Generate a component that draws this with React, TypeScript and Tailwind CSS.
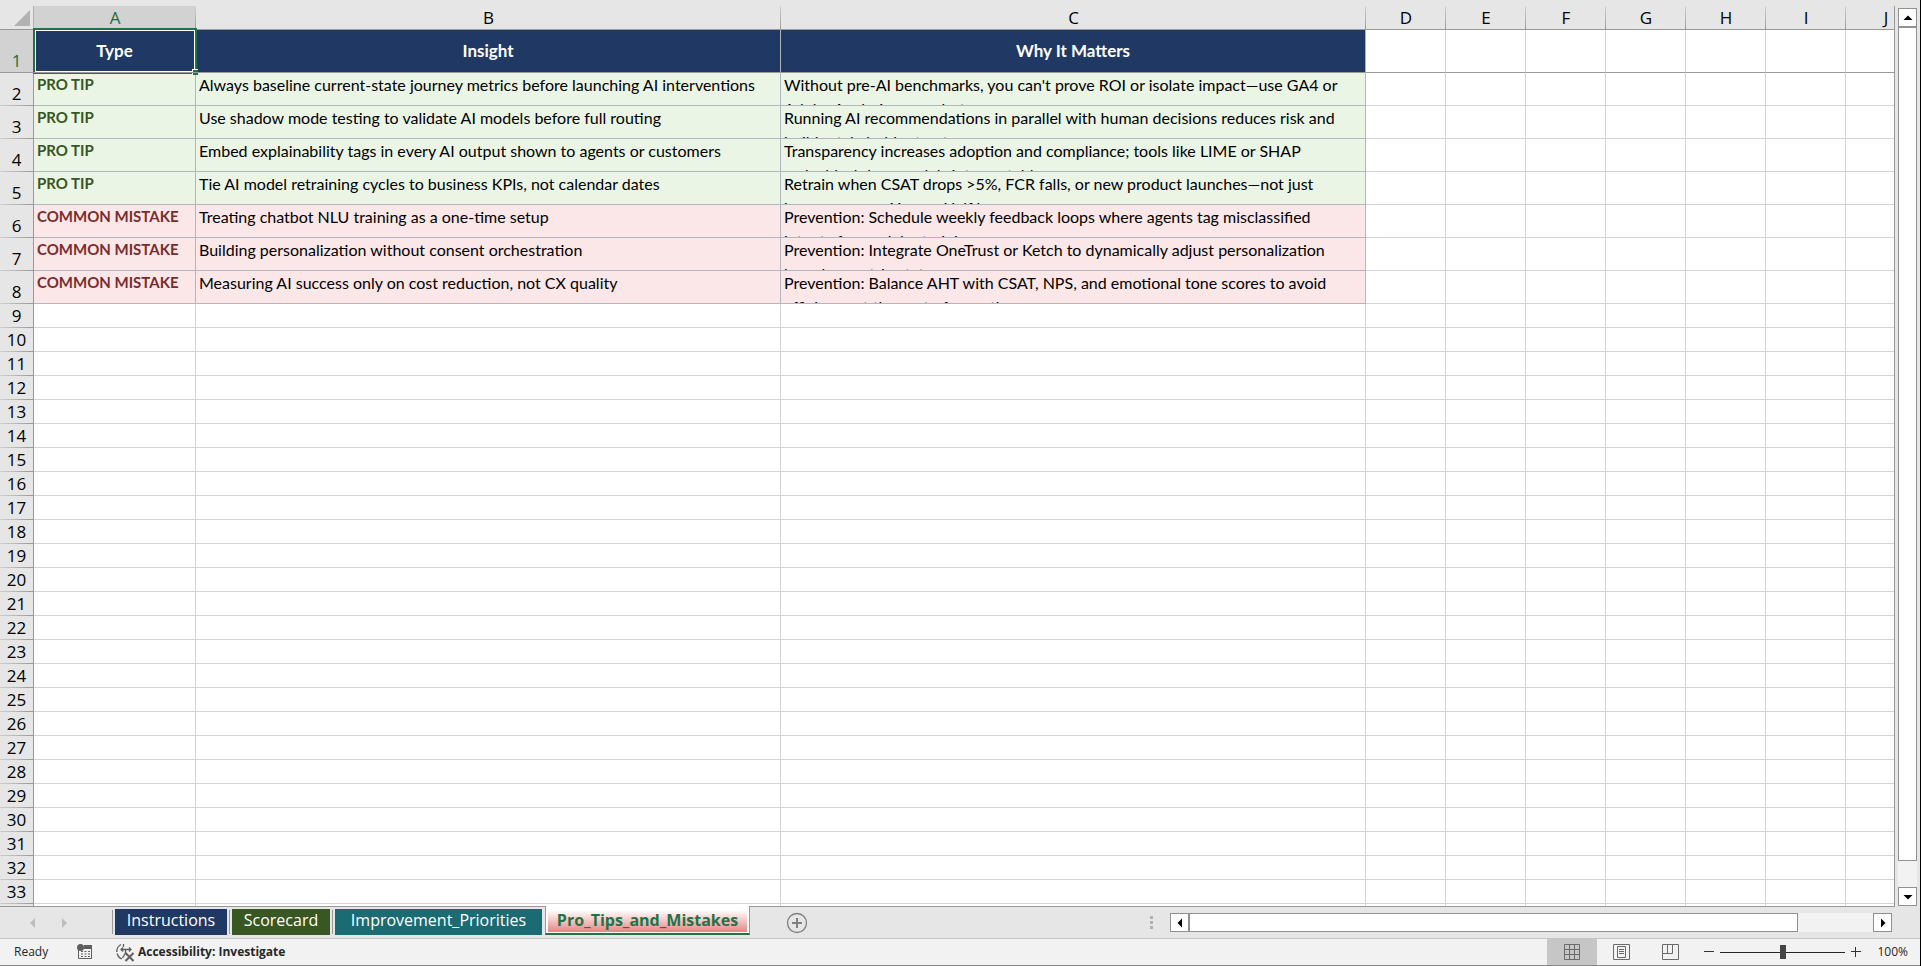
import { useState } from 'react';
import { clsx } from 'clsx';

const columns = ['A', 'B', 'C', 'D', 'E', 'F', 'G', 'H', 'I', 'J'];
const widths = ['w-[162px]', 'w-[585px]', 'w-[585px]', 'w-20', 'w-20', 'w-20', 'w-20', 'w-20', 'w-20', 'w-20'];
const blankColumns = columns.slice(3);
const blankRows = Array.from({ length: 26 }, (_, i) => i + 9);

const insights = [
  {
    type: 'PRO TIP',
    insight: 'Always baseline current-state journey metrics before launching AI interventions',
    why: ["Without pre-AI benchmarks, you can't prove ROI or isolate impact—use GA4 or", 'Adobe Analytics snapshots.'],
  },
  {
    type: 'PRO TIP',
    insight: 'Use shadow mode testing to validate AI models before full routing',
    why: ['Running AI recommendations in parallel with human decisions reduces risk and', 'builds stakeholder trust.'],
  },
  {
    type: 'PRO TIP',
    insight: 'Embed explainability tags in every AI output shown to agents or customers',
    why: ['Transparency increases adoption and compliance; tools like LIME or SHAP', 'make black-box models interpretable.'],
  },
  {
    type: 'PRO TIP',
    insight: 'Tie AI model retraining cycles to business KPIs, not calendar dates',
    why: ['Retrain when CSAT drops >5%, FCR falls, or new product launches—not just', 'because a new Year or Half began.'],
  },
  {
    type: 'COMMON MISTAKE',
    insight: 'Treating chatbot NLU training as a one-time setup',
    why: ['Prevention: Schedule weekly feedback loops where agents tag misclassified', 'intents for model retraining.'],
  },
  {
    type: 'COMMON MISTAKE',
    insight: 'Building personalization without consent orchestration',
    why: ['Prevention: Integrate OneTrust or Ketch to dynamically adjust personalization', 'based on opt-in status.'],
  },
  {
    type: 'COMMON MISTAKE',
    insight: 'Measuring AI success only on cost reduction, not CX quality',
    why: ['Prevention: Balance AHT with CSAT, NPS, and emotional tone scores to avoid', 'efficiency at the cost of empathy.'],
  },
];

const tabs = [
  { name: 'Instructions', style: 'w-28 bg-[#203864]' },
  { name: 'Scorecard', style: 'w-[98px] bg-[#385723]' },
  { name: 'Improvement_Priorities', style: 'w-[207px] bg-[#1b6b72]' },
];

const ui = "font-['Open_Sans','Noto_Sans',sans-serif]";
const rowHead =
  'p-0 text-center align-bottom font-normal text-[17px] leading-6 border-r border-[#999] bg-no-repeat bg-bottom bg-[length:100%_1px] bg-[linear-gradient(to_right,#d0d0d0,#999)]';
const scrollButton = 'flex size-[19px] shrink-0 items-center justify-center border border-[#919191] bg-white';

function Arrow({ d, className }: { d: string; className?: string }) {
  return (
    <svg viewBox="0 0 10 10" className={clsx('size-[10px]', className)} fill="currentColor">
      <path d={d} />
    </svg>
  );
}

function Sheet() {
  return (
    <div className="min-w-0 flex-1 overflow-hidden border-r border-b border-[#999] bg-white">
      <table className={clsx('w-max table-fixed border-separate border-spacing-0 text-black', ui)}>
        <colgroup>
          <col className="w-[34px]" />
          {columns.map((c, i) => (
            <col key={c} className={widths[i]} />
          ))}
        </colgroup>
        <thead>
          <tr className="h-6 bg-[#e6e6e6]">
            <td className="border-b border-[#999] p-0">
              <svg viewBox="0 0 34 23" className="block h-[23px] w-[34px]">
                <path d="M30 4v16H14z" fill="#b2b2b2" />
                <path d="M33.500 0v23" stroke="#b2b2b2" />
              </svg>
            </td>
            {columns.map((c) => (
              <th
                key={c}
                scope="col"
                className={clsx(
                  'border-b border-[#999] bg-[linear-gradient(to_bottom,#d0d0d0,#999)] bg-[length:1px_100%] bg-right bg-no-repeat p-0 text-[17px] leading-[23px] font-normal',
                  c === 'A' && 'bg-[#d2d2d2] text-[#1e6b41]',
                )}
              >
                {c}
              </th>
            ))}
          </tr>
        </thead>
        <tbody>
          <tr className="h-[43px]">
            <th scope="row" className="border-r border-b border-[#999] bg-[#d2d2d2] p-0 align-bottom text-[17px] leading-[22px] font-normal text-[#1e6b41]">
              1
            </th>
            {['Type', 'Insight', 'Why It Matters'].map((title, i) => (
              <td
                key={title}
                className="relative border-r border-b border-r-[#adb5c4] border-b-[#999] bg-[#203864] p-0 text-center font-[Lato,sans-serif] text-[17px] leading-6 font-bold text-white"
              >
                {title}
                {i === 0 && (
                  <>
                    <span className="absolute -top-0.5 -right-0.5 -bottom-0.5 -left-px z-10 border-2 border-[#217346]">
                      <span className="absolute inset-0 border border-white" />
                    </span>
                    <span className="absolute -right-[3px] -bottom-[3px] z-10 size-[6px] border-t border-l border-white bg-[#217346]" />
                    <span className="absolute -right-[3px] -bottom-px -left-px z-10 h-px bg-[#999]" />
                  </>
                )}
              </td>
            ))}
            {blankColumns.map((c) => (
              <td key={c} className="border-r border-b border-r-[#d4d4d4] border-b-[#999]" />
            ))}
          </tr>
          {insights.map((row, i) => {
            const tip = row.type === 'PRO TIP';
            const cell = clsx('border-r border-b border-[#b0b7c0] py-0 pr-0 pl-[3px] align-top', tip ? 'bg-[#eaf5e6]' : 'bg-[#fbe7e8]');
            return (
              <tr key={row.insight} className="h-[33px]">
                <th scope="row" className={clsx(rowHead, 'bg-[#e6e6e6]')}>
                  {i + 2}
                </th>
                <td className={cell}>
                  <div className={clsx('h-8 overflow-hidden font-[Lato,sans-serif] text-[15px] leading-[22px] font-bold', tip ? 'text-[#375623]' : 'text-[#7b2c2c]')}>
                    {row.type}
                  </div>
                </td>
                <td className={cell}>
                  <div className="h-8 overflow-hidden font-[Lato,sans-serif] text-base leading-6 whitespace-nowrap">{row.insight}</div>
                </td>
                <td className={cell}>
                  <div className="h-8 overflow-hidden font-[Lato,sans-serif] text-base leading-6 whitespace-nowrap">
                    {row.why[0]}
                    <br />
                    {row.why[1]}
                  </div>
                </td>
                {blankColumns.map((c) => (
                  <td key={c} className="border-r border-b border-[#d4d4d4]" />
                ))}
              </tr>
            );
          })}
          {blankRows.map((n) => (
            <tr key={n} className="h-6">
              <th scope="row" className={clsx(rowHead, 'bg-[#e6e6e6]')}>
                {n}
              </th>
              {columns.map((c) => (
                <td key={c} className="border-r border-b border-[#d4d4d4] p-0" />
              ))}
            </tr>
          ))}
        </tbody>
      </table>
    </div>
  );
}

function VerticalScroll() {
  return (
    <div className="mr-[3px] ml-[3px] flex w-[19px] flex-col pt-0.5 pb-px">
      <button type="button" aria-label="Scroll up" className={scrollButton}>
        <Arrow d="M5 2.500L9.500 7h-9z" />
      </button>
      <div className="flex min-h-0 flex-1 flex-col bg-[#f2f2f2]">
        <div className="h-[97%] border border-[#919191] bg-white" />
      </div>
      <button type="button" aria-label="Scroll down" className={scrollButton}>
        <Arrow d="M5 7.500L.5 3h9z" />
      </button>
    </div>
  );
}

function TabBar() {
  return (
    <div className={clsx('flex h-8 shrink-0 border-b border-[#c6c6c6] text-base leading-[22px]', ui)}>
      <div className="flex w-28 items-center gap-[21px] pl-7 text-[#bdbdbd]">
        <button type="button" aria-label="Previous sheets">
          <Arrow d="M7 0v10L2 5z" />
        </button>
        <button type="button" aria-label="Next sheets">
          <Arrow d="M3 0v10l5-5z" />
        </button>
      </div>
      {tabs.map((tab) => (
        <div key={tab.name} className="flex pt-0.5">
          <span className="mt-px mr-0.5 h-6 w-px bg-[#999]" />
          <button type="button" className={clsx('mr-0.5 flex h-[26px] items-start justify-center text-white', tab.style)}>
            {tab.name}
          </button>
        </div>
      ))}
      <button type="button" className="-mt-px ml-px h-[29px] w-[205px] border-x border-b-2 border-x-[#999] border-b-[#217346] bg-white px-0.5 pt-1 pb-px font-bold text-[#217346]">
        <span className="flex h-[22px] items-start justify-center bg-linear-to-b from-white to-[#e28686] leading-5">Pro_Tips_and_Mistakes</span>
      </button>
      <button type="button" aria-label="New sheet" className="ml-9">
        <svg viewBox="0 0 22 22" className="size-[22px]" fill="none" stroke="#808080">
          <circle cx="11" cy="11" r="9.500" strokeWidth="1.300" />
          <path d="M11 6v10M6 11h10" strokeWidth="2" />
        </svg>
      </button>
      <div className="mr-7 ml-auto flex w-[742px] items-center">
        <svg viewBox="0 0 3 13" className="mr-[17px] h-[13px] w-[3px]" fill="#b0b0b0">
          <path d="M0 0h3v3H0zM0 5h3v3H0zM0 10h3v3H0z" />
        </svg>
        <button type="button" aria-label="Scroll left" className={scrollButton}>
          <Arrow d="M7 .5v9L2.500 5z" />
        </button>
        <div className="h-[19px] flex-1 bg-[#f2f2f2]">
          <div className="h-[19px] w-[89%] border border-[#919191] bg-white" />
        </div>
        <button type="button" aria-label="Scroll right" className={scrollButton}>
          <Arrow d="M3 .5v9L7.500 5z" />
        </button>
      </div>
    </div>
  );
}

function StatusBar() {
  const [zoom, setZoom] = useState(100);

  return (
    <div className={clsx('flex h-[27px] shrink-0 items-center border-b border-[#8a8a8a] bg-[#f2f2f2] text-xs text-[#262626]', ui)}>
      <span className="w-[63px] pl-3.5">Ready</span>
      <button type="button" aria-label="Record macro" className="ml-3.5">
        <svg viewBox="0 0 16 16" className="size-4" fill="none" stroke="#5f5f5f">
          <path d="M1.500 6v8.500h13V1.500H7" />
          <path d="M7 1h8v4H7z" fill="#5f5f5f" stroke="none" />
          <path d="M4 7.500h2M7.500 7.500h2M11 7.500h2M4 10h2M7.500 10h2M11 10h2M4 12.500h2M7.500 12.500h2M11 12.500h2" />
          <circle cx="3.500" cy="3.500" r="3.500" fill="#5f5f5f" stroke="none" />
        </svg>
      </button>
      <button type="button" className="ml-[22px] flex items-center gap-[3px] font-bold">
        <svg viewBox="0 0 20 19" className="h-[19px] w-5" fill="none" stroke="#5f5f5f" strokeWidth="1.300">
          <path d="M6 1.500A8 8 0 0 0 7 16" strokeDasharray="9 1.500" />
          <path d="M8.500 1v3M6 6.500h10M8 4.500l-2 2 2 2M14 4.500l2 2-2 2M10.500 7v3l-3 5" />
          <path d="M10.500 10l8 8M18.500 10l-8 8" strokeWidth="2" />
        </svg>
        Accessibility: Investigate
      </button>
      <div className="ml-auto flex h-full items-center">
        <button type="button" aria-label="Normal view" className="flex h-full w-[50px] items-center justify-center bg-[#c6c6c6]">
          <svg viewBox="0 0 16 16" className="size-4" fill="none" stroke="#6a6a6a">
            <path d="M.5.5h15v15H.5zM5.500.5v15M10.500.5v15M.5 5.500h15M.5 10.500h15" />
          </svg>
        </button>
        <button type="button" aria-label="Page layout view" className="flex h-full w-[49px] items-center justify-center">
          <svg viewBox="0 0 17 16" className="h-4 w-[17px]" fill="none" stroke="#6a6a6a">
            <path d="M.5.5h16v15H.5zM4.500 2.500h8v11h-8zM6 5.500h5M6 7.500h5M6 9.500h5" />
          </svg>
        </button>
        <button type="button" aria-label="Page break preview" className="flex h-full w-[49px] items-center justify-center">
          <svg viewBox="0 0 17 16" className="h-4 w-[17px]" fill="none" stroke="#6a6a6a">
            <path d="M.5.5h16v15H.5zM.5 9.500h10v-9M5.500.5v9" />
          </svg>
        </button>
        <button type="button" aria-label="Zoom out" onClick={() => setZoom(Math.max(10, zoom - 10))} className="ml-[9px]">
          <svg viewBox="0 0 10 10" className="size-[10px]" stroke="#333">
            <path d="M0 4.500h10" />
          </svg>
        </button>
        <input
          type="range"
          aria-label="Zoom"
          min={10}
          max={190}
          value={zoom}
          onChange={(e) => setZoom(Number(e.target.value))}
          className="mx-1.5 h-[14px] w-[125px] appearance-none bg-[linear-gradient(#262626,#262626)] bg-[length:100%_1px] bg-center bg-no-repeat [&::-webkit-slider-thumb]:h-[14px] [&::-webkit-slider-thumb]:w-[6px] [&::-webkit-slider-thumb]:appearance-none [&::-webkit-slider-thumb]:bg-[#444]"
        />
        <button type="button" aria-label="Zoom in" onClick={() => setZoom(Math.min(190, zoom + 10))}>
          <svg viewBox="0 0 10 10" className="size-[10px]" stroke="#333">
            <path d="M0 4.500h10M4.500 0v10" />
          </svg>
        </button>
        <span className="mr-3 w-[47px] text-right">{zoom}%</span>
      </div>
    </div>
  );
}

export default function App() {
  return (
    <div className="flex h-screen flex-col overflow-hidden border-r border-black bg-[#e6e6e6] pt-1.5">
      <div className="flex min-h-0 flex-1">
        <Sheet />
        <VerticalScroll />
      </div>
      <TabBar />
      <StatusBar />
    </div>
  );
}
